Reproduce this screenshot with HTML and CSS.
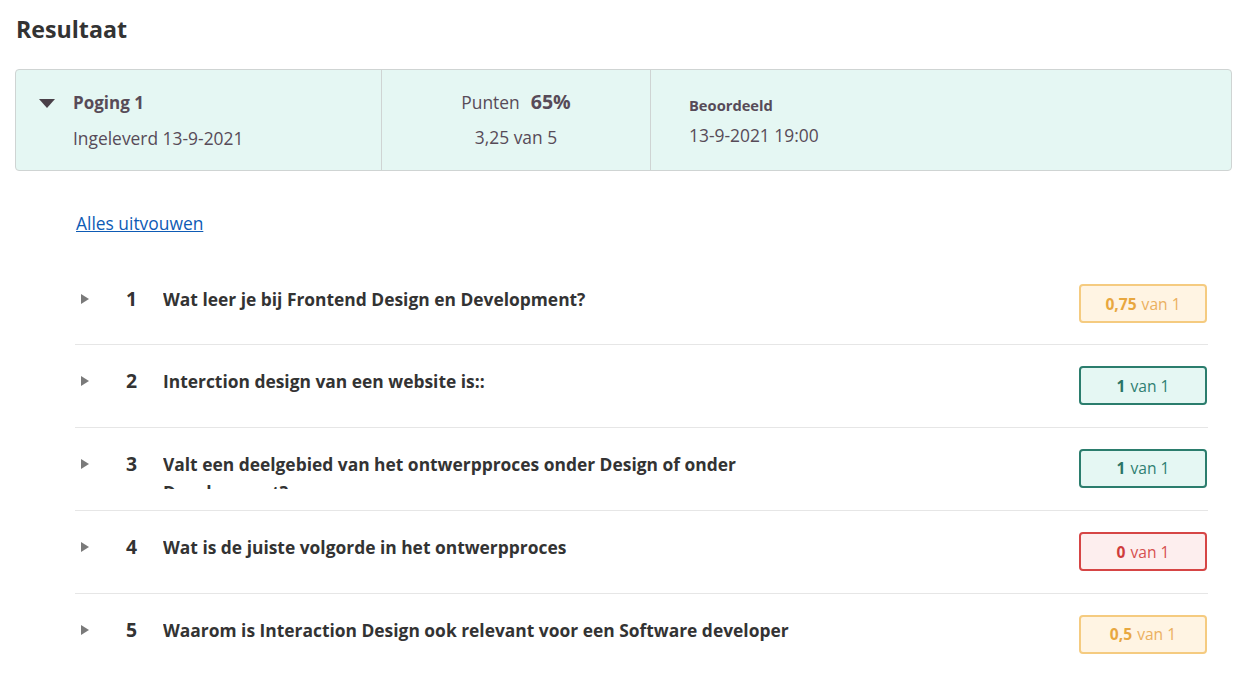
FILE: index.html
```html
<!DOCTYPE html>
<html lang="nl">
<head>
<meta charset="utf-8">
<title>Resultaat</title>
<link rel="stylesheet" href="styles.css">
</head>
<body>
<main class="page">
  <h1 class="page-title">Resultaat</h1>

  <section class="attempt">
    <div class="attempt-col attempt-main">
      <svg class="caret-down" width="16" height="9" viewBox="0 0 16 9"><path d="M0 0H16L8 9Z" fill="#4a4048"/></svg>
      <div class="attempt-info">
        <div class="attempt-name">Poging 1</div>
        <div class="attempt-date">Ingeleverd 13-9-2021</div>
      </div>
    </div>
    <div class="attempt-col attempt-score">
      <div class="score-line"><span class="score-label">Punten</span><strong class="score-pct">65%</strong></div>
      <div class="score-sub">3,25 van 5</div>
    </div>
    <div class="attempt-col attempt-graded">
      <div class="graded-label">Beoordeeld</div>
      <div class="graded-date">13-9-2021 19:00</div>
    </div>
  </section>

  <section class="questions">
    <a class="expand-all" href="#">Alles uitvouwen</a>

    <ul class="q-list">
      <li class="q-row">
        <span class="q-toggle"><svg width="8" height="10" viewBox="0 0 8 10"><path d="M0 0L8 5L0 10Z" fill="#7a7a7a"/></svg></span>
        <span class="q-num">1</span>
        <span class="q-title">Wat leer je bij Frontend Design en Development?</span>
        <span class="q-badge badge-partial"><b>0,75</b> van 1</span>
      </li>
      <li class="q-row">
        <span class="q-toggle"><svg width="8" height="10" viewBox="0 0 8 10"><path d="M0 0L8 5L0 10Z" fill="#7a7a7a"/></svg></span>
        <span class="q-num">2</span>
        <span class="q-title">Interction design van een website is::</span>
        <span class="q-badge badge-correct"><b>1</b> van 1</span>
      </li>
      <li class="q-row">
        <span class="q-toggle"><svg width="8" height="10" viewBox="0 0 8 10"><path d="M0 0L8 5L0 10Z" fill="#7a7a7a"/></svg></span>
        <span class="q-num">3</span>
        <span class="q-title">Valt een deelgebied van het ontwerpproces onder Design of onder Development?</span>
        <span class="q-badge badge-correct"><b>1</b> van 1</span>
      </li>
      <li class="q-row">
        <span class="q-toggle"><svg width="8" height="10" viewBox="0 0 8 10"><path d="M0 0L8 5L0 10Z" fill="#7a7a7a"/></svg></span>
        <span class="q-num">4</span>
        <span class="q-title">Wat is de juiste volgorde in het ontwerpproces</span>
        <span class="q-badge badge-wrong"><b>0</b> van 1</span>
      </li>
      <li class="q-row">
        <span class="q-toggle"><svg width="8" height="10" viewBox="0 0 8 10"><path d="M0 0L8 5L0 10Z" fill="#7a7a7a"/></svg></span>
        <span class="q-num">5</span>
        <span class="q-title">Waarom is Interaction Design ook relevant voor een Software developer</span>
        <span class="q-badge badge-partial"><b>0,5</b> van 1</span>
      </li>
    </ul>
  </section>
</main>
</body>
</html>
```

FILE: styles.css
```css
* { box-sizing: border-box; }

html, body {
  margin: 0;
  padding: 0;
  background: #ffffff;
}

body {
  font-family: "Open Sans", "Liberation Sans", sans-serif;
  color: #333333;
  font-size: 17.4px;
}

.page {
  padding: 13px 10px 0 15px;
}

.page-title {
  margin: 0 0 0 1px;
  font-size: 23.2px;
  font-weight: 700;
  line-height: 32px;
  color: #333333;
}

.attempt {
  margin-top: 24px;
  display: grid;
  grid-template-columns: 366px 269px 1fr;
  height: 102px;
  background: #e5f7f3;
  border: 1px solid #cfd4d3;
  border-radius: 4px;
  color: #574b58;
}

.attempt-col {
  border-right: 1px solid #cfd4d3;
}

.attempt-col:last-child { border-right: none; }

.attempt-main {
  display: flex;
  align-items: flex-start;
  padding: 20px 0 0 23px;
}

.caret-down {
  margin-top: 9px;
  flex: none;
}

.attempt-info {
  margin-left: 18px;
}

.attempt-name {
  font-weight: 700;
  font-size: 17px;
  line-height: 26px;
}

.attempt-date {
  margin-top: 10px;
  font-size: 17.4px;
  line-height: 24px;
}

.attempt-score {
  text-align: center;
  padding-top: 19px;
}

.score-line {
  line-height: 26px;
}

.score-label {
  font-size: 17.4px;
}

.score-pct {
  font-size: 19.6px;
  font-weight: 700;
  margin-left: 11px;
}

.score-sub {
  margin-top: 11px;
  font-size: 17.4px;
  line-height: 22px;
}

.attempt-graded {
  padding: 24px 0 0 38px;
}

.graded-label {
  font-size: 14.7px;
  font-weight: 700;
  line-height: 22px;
}

.graded-date {
  margin-top: 7px;
  font-size: 17.4px;
  line-height: 24px;
}

.questions {
  margin: 40px 24px 0 60px;
}

.expand-all {
  display: inline-block;
  margin-left: 1px;
  font-size: 17.4px;
  line-height: 24px;
  color: #0e5bb5;
  text-decoration: underline;
}

.q-list {
  list-style: none;
  margin: 28px 0 0 0;
  padding: 0;
}

.q-row {
  display: flex;
  align-items: flex-start;
  padding: 22px 0 21.4px 0;
  border-bottom: 1px solid #e6e6e6;
}

.q-row:last-child { border-bottom: none; }

.q-toggle {
  flex: none;
  width: 50px;
  padding-left: 6px;
  height: 28px;
  display: flex;
  align-items: center;
}

.q-num {
  flex: none;
  width: 38px;
  padding-left: 1px;
  font-size: 19.4px;
  font-weight: 700;
  line-height: 28px;
  color: #333333;
}

.q-title {
  flex: none;
  width: 650px;
  max-height: 39px;
  overflow: hidden;
  font-size: 17.4px;
  font-weight: 700;
  line-height: 28px;
  color: #333333;
}

.q-badge {
  margin-left: auto;
  margin-right: 1px;
  margin-top: -1px;
  width: 128px;
  height: 39px;
  border: 2px solid;
  border-radius: 4px;
  display: flex;
  align-items: center;
  justify-content: center;
  font-size: 15.6px;
  gap: 5px;
}

.q-badge b { font-weight: 700; }

.badge-partial {
  border-color: #f5cb80;
  background: #fff4e3;
  color: #ebb060;
}
.badge-partial b { color: #e8a73f; }

.badge-correct {
  border-color: #2b7d6d;
  background: #e5f7f3;
  color: #2f7f72;
}
.badge-correct b { color: #2a7466; }

.badge-wrong {
  border-color: #d64545;
  background: #fdeeee;
  color: #d65050;
}
.badge-wrong b { color: #cf3c3c; }
```
